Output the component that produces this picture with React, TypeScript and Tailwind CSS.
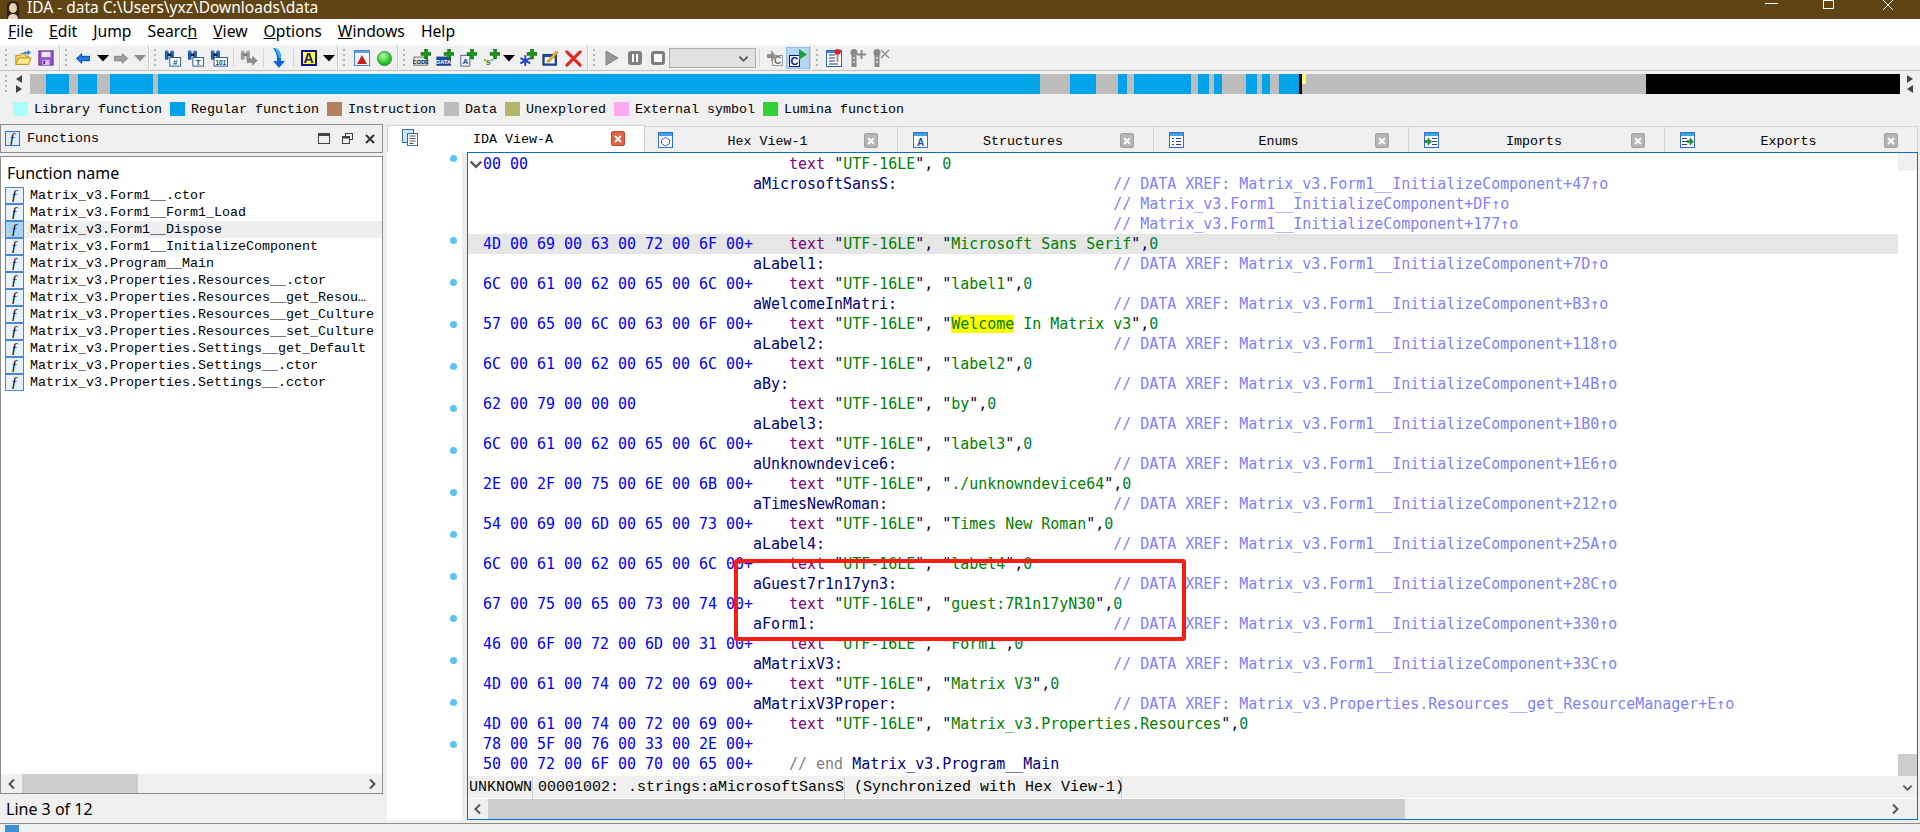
import React from "react";

const MONO = "font-['DejaVu_Sans_Mono',monospace]";
const FIXED = "font-['Liberation_Mono',monospace]";
const SANS = "font-['Noto_Sans',sans-serif]";

/* ---------- small drawn pieces ---------- */
function Handle({ className = "" }: { className?: string }) {
  return (
    <svg width="4" height="20" viewBox="0 0 4 20" className={`shrink-0 ${className}`}>
      {[1, 6, 11, 16].map((y) => (
        <rect key={y} x="1" y={y} width="2" height="2" fill="#b4b4b4" />
      ))}
    </svg>
  );
}
const GroupEnd = ({ className = "" }: { className?: string }) => (
  <div className={`w-[2px] h-[26px] bg-[#cfcfcf] border-r border-white shrink-0 ${className}`} />
);
const ThinSep = ({ className = "" }: { className?: string }) => <div className={`w-px h-[18px] bg-[#d4d4d4] shrink-0 ${className}`} />;

function Btn({ w = 23, children, active = false }: { w?: number; children: React.ReactNode; active?: boolean }) {
  return (
    <div
      style={{ width: w }}
      className={`h-[22px] flex items-center justify-center shrink-0 ${active ? "bg-[#b5d7f3] border border-[#8fc1ea]" : ""}`}
    >
      {children}
    </div>
  );
}
const Drop = ({ c = "#000" }: { c?: string }) => (
  <svg width="12" height="7" viewBox="0 0 12 7"><path d="M0 0h12L6 6.5z" fill={c} /></svg>
);
const IOpen = () => (
  <svg width="18" height="18" viewBox="0 0 20 20">
    <path d="M2 7h5l1-2h5v3h3v9H2z" fill="#f6d060" stroke="#b08a1e" />
    <path d="M2 17l3-7h14l-3 7z" fill="#ffe98a" stroke="#b08a1e" />
    <path d="M9 6c1-3 4-3 6-3V1l4 3-4 3V5c-2 0-4 0-6 1z" fill="#2a7fe0" />
  </svg>
);
const ISave = () => (
  <svg width="16" height="16" viewBox="0 0 18 18">
    <rect x="1" y="1" width="16" height="16" fill="#9a4fd0" stroke="#5a2a90" />
    <rect x="4" y="2" width="10" height="6" fill="#e8e8ee" />
    <rect x="5" y="11" width="8" height="6" fill="#d6c0ea" />
    <rect x="6" y="12" width="2" height="4" fill="#5a2a90" />
  </svg>
);
const IArrow = ({ dir, c1, c2 }: { dir: "l" | "r"; c1: string; c2: string }) => (
  <svg width="14" height="11" viewBox="0 0 16 12" style={{ transform: dir === "r" ? "scaleX(-1)" : undefined }}>
    <path d="M0.5 6L6.5 0.5V3.5H15.5V8.5H6.5V11.5z" fill={c1} stroke={c2} />
  </svg>
);
function IBin({ label, grey }: { label?: string; grey?: boolean }) {
  const c = grey ? "#9a9a9a" : "#1f5fae";
  const wide = label === "101";
  return (
    <svg width="18" height="18" viewBox="0 0 20 20">
      <rect x="1" y="2" width="4" height="10" rx="1" fill={c} />
      <rect x="7" y="2" width="4" height="10" rx="1" fill={c} />
      <rect x="4" y="5" width="4" height="3" fill={grey ? "#777" : "#123"} />
      <rect x="2" y="1" width="2" height="2" fill={grey ? "#ccc" : "#6fa8e0"} />
      <rect x="8" y="1" width="2" height="2" fill={grey ? "#ccc" : "#6fa8e0"} />
      {label ? (
        <>
          <rect x={wide ? 4.5 : 6.5} y="9.5" width={wide ? 15 : 12} height="9.5" fill="#fff" stroke="#1f4f86" />
          <text x={wide ? 12 : 12.5} y="17.5" textAnchor="middle" fontSize={wide ? 7 : 9} fontWeight="bold" fill="#123f70" fontFamily="Liberation Sans">
            {label}
          </text>
        </>
      ) : (
        <path d="M8 11h6V8l5 5-5 5v-3H8z" fill="#8e8e8e" stroke="#6e6e6e" strokeWidth=".6" />
      )}
    </svg>
  );
}
const IDown = () => (
  <svg width="14" height="20" viewBox="0 0 14 20">
    <path d="M1 0c5 0 8 3 8 10v3h4l-6 7-6-7h4v-2C5 6 3 3 1 0z" fill="#0d66dc" />
    <path d="M1 0c5 0 8 3 8 10h-2C6 5 4 2 1 0z" fill="#36b6f2" />
  </svg>
);
const IAbox = () => (
  <div className="w-[16px] h-[16px] bg-[#ffff33] border-2 border-[#14148c] flex items-center justify-center text-[#14148c] text-[14px] font-bold leading-none font-['Liberation_Sans',sans-serif]">
    A
  </div>
);
const IWarn = () => (
  <svg width="16" height="18" viewBox="0 0 16 18">
    <rect x=".5" y="1.5" width="15" height="15" fill="#f2f6fc" stroke="#3f86dc" />
    <rect x="1" y="2" width="14" height="2" fill="#5f9fe8" />
    <path d="M8 6l5 9H3z" fill="#c8201a" />
  </svg>
);
const IGreen = () => (
  <div className="w-[15px] h-[15px] rounded-full border border-[#2c8a2c] bg-[radial-gradient(circle_at_40%_30%,#b8ffb0,#28c828_60%,#109010)]" />
);
const Plus = () => (
  <path d="M13 0h3v4h4v3h-4v4h-3V7H9V4h4z" fill="#14a014" stroke="#0a4a0a" strokeWidth=".7" />
);
function IAdd({ t }: { t: "code" | "data" | "a" | "s" | "star" }) {
  return (
    <svg width="18" height="18" viewBox="0 0 20 20">
      {t === "code" && (
        <>
          <rect x="1" y="9" width="15" height="9" fill="#e8e8e8" stroke="#666" />
          <text x="8.5" y="16.5" textAnchor="middle" fontSize="6.4" fontWeight="bold" fill="#111" fontFamily="Liberation Sans">CODE</text>
        </>
      )}
      {t === "data" && (
        <>
          <rect x="1" y="9" width="15" height="9" fill="#1c4fa8" stroke="#102a66" />
          <text x="8.5" y="16.5" textAnchor="middle" fontSize="6.4" fontWeight="bold" fill="#fff" fontFamily="Liberation Sans">DATA</text>
        </>
      )}
      {t === "a" && (
        <>
          <rect x="2" y="7" width="10" height="12" fill="#eef3fa" stroke="#557" />
          <text x="7" y="17" textAnchor="middle" fontSize="9" fontWeight="bold" fill="#1c4fa8" fontFamily="Liberation Sans">A</text>
        </>
      )}
      {t === "s" && (
        <text x="7" y="18" textAnchor="middle" fontSize="10" fontWeight="bold" fill="#2c8a2c" fontFamily="Liberation Sans">'s'</text>
      )}
      {t === "star" && (
        <g stroke="#1c3fd0" strokeWidth="2">
          <path d="M7 7v12M1.5 10l11 6M1.5 16l11-6" />
        </g>
      )}
      <Plus />
    </svg>
  );
}
const IPencil = () => (
  <svg width="18" height="18" viewBox="0 0 20 20">
    <rect x="1" y="6" width="15" height="12" fill="#1c4fa8" stroke="#0e2a66" />
    <rect x="3" y="9" width="11" height="7" fill="#fff" />
    <path d="M5 14L16 2l2 2L8 15z" fill="#f0b030" stroke="#a06a10" strokeWidth=".6" />
  </svg>
);
const IRedX = () => (
  <svg width="17" height="17" viewBox="0 0 18 18">
    <path d="M2 2l14 14M16 2L2 16" stroke="#e4261c" strokeWidth="3.2" strokeLinecap="round" />
  </svg>
);
const IPlay = () => (
  <svg width="14" height="16" viewBox="0 0 14 16"><path d="M1 1l12 7-12 7z" fill="#9a9a9a" stroke="#7c7c7c" /></svg>
);
const IPause = () => (
  <div className="w-[14px] h-[14px] rounded-[3px] bg-[#7f7f7f] flex items-center justify-center gap-[2px]">
    <div className="w-[2px] h-[8px] bg-white" />
    <div className="w-[2px] h-[8px] bg-white" />
  </div>
);
const IStop = () => (
  <div className="w-[14px] h-[14px] rounded-[3px] bg-[#7f7f7f] flex items-center justify-center">
    <div className="w-[8px] h-[8px] bg-white" />
  </div>
);
const ICArrow = () => (
  <svg width="18" height="18" viewBox="0 0 18 18">
    <rect x="6.5" y="6.5" width="10" height="10" fill="#f4f4f4" stroke="#9a9a9a" />
    <text x="11.5" y="15" textAnchor="middle" fontSize="10" fontWeight="bold" fill="#707070" fontFamily="Liberation Sans">C</text>
    <path d="M1 5h4V1l5 6-5 6V9H1z" fill="#8e8e8e" />
  </svg>
);
const ICPlay = () => (
  <svg width="18" height="18" viewBox="0 0 18 18">
    <rect x=".5" y="6.5" width="10" height="11" fill="#f8f8ff" stroke="#14148c" />
    <text x="5.5" y="16" textAnchor="middle" fontSize="11" fontWeight="bold" fill="#14148c" fontFamily="Liberation Sans">C</text>
    <path d="M10 0l8 5.5-8 5.5z" fill="#18a030" />
  </svg>
);
const IDocPin = () => (
  <svg width="17" height="18" viewBox="0 0 17 18">
    <rect x=".5" y="1.5" width="15" height="16" fill="#fff" stroke="#2a62b8" />
    <rect x="1" y="2" width="14" height="2" fill="#3f86dc" />
    <path d="M3 6h6M3 9h6M3 12h6M3 15h9" stroke="#1c3f86" />
    <circle cx="11.5" cy="3" r="3" fill="#e41c1c" />
    <rect x="10.5" y="5" width="2" height="8" fill="#b88a8a" />
  </svg>
);
const IKey = ({ x }: { x?: boolean }) => (
  <svg width="18" height="18" viewBox="0 0 18 18">
    <circle cx="5" cy="3.5" r="3.5" fill="#8a8a8a" />
    <rect x="2.5" y="5" width="5" height="13" fill="#8a8a8a" />
    <rect x="4" y="8" width="2" height="2" fill="#d0d0d0" />
    <rect x="4" y="12" width="2" height="2" fill="#d0d0d0" />
    {x ? (
      <path d="M9 1l8 8M17 1L9 9" stroke="#8a8a8a" strokeWidth="1.2" />
    ) : (
      <path d="M11.5 1h2v3.5H17v2h-3.500V10h-2V6.500H8v-2h3.500z" fill="#8a8a8a" />
    )}
  </svg>
);
const Chevron = ({ dir, size = 12 }: { dir: "l" | "r" | "d"; size?: number }) => {
  const d = dir === "l" ? "M8 1.500L3.500 6 8 10.500" : dir === "r" ? "M4 1.500L8.500 6 4 10.500" : "M1.500 4L6 8.500 10.500 4";
  return (
    <svg width={size} height={size} viewBox="0 0 12 12">
      <path d={d} fill="none" stroke="#555" strokeWidth="2" />
    </svg>
  );
};

/* ---------- tab icons ---------- */
function TabIcon({ kind }: { kind: string }) {
  const frame = (inner: React.ReactNode) => (
    <svg width="16" height="17" viewBox="0 0 16 17" className="shrink-0">
      <rect x=".5" y="1.500" width="14" height="15" fill="#fff" stroke="#2e6fd8" />
      <rect x="1" y="2" width="13" height="3" fill="#3f9fe8" />
      {inner}
    </svg>
  );
  if (kind === "ida")
    return (
      <svg width="16" height="17" viewBox="0 0 16 17" className="shrink-0">
        <rect x=".5" y=".5" width="11" height="13" fill="#cfe6fa" stroke="#2e6fa8" />
        <rect x="5.500" y="4.500" width="10" height="12" fill="#fff" stroke="#2e6fa8" />
        <path d="M7.500 7h6M7.500 9.500h6M7.500 12h6M7.500 14.500h4" stroke="#456" />
      </svg>
    );
  if (kind === "hex") return frame(<path d="M7.500 6.500l4 2.500v3.500l-4 2.500-4-2.500V9z" fill="#fff" stroke="#3f5ae0" />);
  if (kind === "struct") return frame(<text x="7.500" y="14.500" textAnchor="middle" fontSize="10" fontWeight="bold" fill="#1c4fa8" fontFamily="Liberation Sans">A</text>);
  if (kind === "enum")
    return frame(<path d="M3 7.500h2m2 0h5M3 10.500h2m2 0h5M3 13.500h2m2 0h5" stroke="#1c3fb8" />);
  if (kind === "imp")
    return frame(<><path d="M8 7.500h5M8 10.500h5M8 13.500h5" stroke="#1c3fb8" /><path d="M1 9.500h3V7l3.500 3.500L4 14v-2.500H1z" fill="#18a030" stroke="#0a4a0a" strokeWidth=".5" /></>);
  return frame(<><path d="M2 7.500h5M2 10.500h5M2 13.500h5" stroke="#1c3fb8" /><path d="M7 9.500h3V7l3.500 3.500L10 14v-2.500H7z" fill="#18a030" stroke="#0a4a0a" strokeWidth=".5" /></>);
}
const TabClose = ({ active }: { active?: boolean }) => (
  <div className={`w-[14px] h-[15px] rounded-[2px] flex items-center justify-center shrink-0 ${active ? "bg-[#dd6545] border border-[#c24a2c]" : "bg-[#b4b4b4] border border-[#a0a0a0]"}`}>
    <svg width="8" height="8" viewBox="0 0 8 8"><path d="M1 1l6 6M7 1L1 7" stroke="#fff" strokeWidth="1.800" /></svg>
  </div>
);

function Tab({ kind, label, active, size }: { kind: string; label: string; active?: boolean; size: string }) {
  return (
    <div
      className={`flex items-start shrink-0 pr-[19px] ${size} ${FIXED} text-[13.33px] text-black ${
        active ? "h-[27px] bg-white border border-b-0 border-[#d0d0d0] pt-[3px]" : "h-[26px] bg-[#f0f0f0] border-t border-r border-[#d4d4d4] pt-[4px] mt-px"
      }`}
    >
      <TabIcon kind={kind} />
      <div className="flex-1 text-center leading-[22px] mr-[3px]">{label}</div>
      <div className="mt-[2px]"><TabClose active={active} /></div>
    </div>
  );
}

/* ---------- data ---------- */
const B = "#00a2e8", G = "#bdbdbd", K = "#000000";
const NAV: [number, string][] = [
  [46, G], [69, B], [78, G], [97, B], [110, G], [153, B], [158, G], [1040, B], [1070, G], [1096, B], [1118, G], [1127, B], [1134, G],
  [1191, B], [1198, G], [1209, B], [1214, G], [1222, B], [1246, G], [1257, B], [1262, G], [1270, B], [1279, G], [1299, B], [1302, K], [1646, G], [1900, K],
];
const LEGEND: [string, string][] = [
  ["#a8ffff", "Library function"],
  ["#00a2e8", "Regular function"],
  ["#b67e5c", "Instruction"],
  ["#bdbdbd", "Data"],
  ["#b3b56b", "Unexplored"],
  ["#ffa8f4", "External symbol"],
  ["#33d133", "Lumina function"],
];
const MENU: [string, string, string][] = [
  ["", "F", "ile"], ["", "E", "dit"], ["", "J", "ump"], ["Searc", "h", ""], ["", "V", "iew"], ["", "O", "ptions"], ["", "W", "indows"], ["Help", "", ""],
];
const FUNCS = [
  "Matrix_v3.Form1__.ctor",
  "Matrix_v3.Form1__Form1_Load",
  "Matrix_v3.Form1__Dispose",
  "Matrix_v3.Form1__InitializeComponent",
  "Matrix_v3.Program__Main",
  "Matrix_v3.Properties.Resources__.ctor",
  "Matrix_v3.Properties.Resources__get_Resou…",
  "Matrix_v3.Properties.Resources__get_Culture",
  "Matrix_v3.Properties.Resources__set_Culture",
  "Matrix_v3.Properties.Settings__get_Default",
  "Matrix_v3.Properties.Settings__.ctor",
  "Matrix_v3.Properties.Settings__.cctor",
];
const XR = "Matrix_v3.Form1__InitializeComponent+";
type Row =
  | { k: "h"; hex: string; s?: string; tail?: "first" | "end" | "none" }
  | { k: "l"; label: string; c: string }
  | { k: "c"; c: string };
const ROWS: Row[] = [
  { k: "h", hex: "00 00", tail: "first" },
  { k: "l", label: "aMicrosoftSansS", c: XR + "47" },
  { k: "c", c: XR + "DF" },
  { k: "c", c: XR + "177" },
  { k: "h", hex: "4D 00 69 00 63 00 72 00 6F 00+", s: "Microsoft Sans Serif" },
  { k: "l", label: "aLabel1", c: XR + "7D" },
  { k: "h", hex: "6C 00 61 00 62 00 65 00 6C 00+", s: "label1" },
  { k: "l", label: "aWelcomeInMatri", c: XR + "B3" },
  { k: "h", hex: "57 00 65 00 6C 00 63 00 6F 00+", s: "Welcome In Matrix v3" },
  { k: "l", label: "aLabel2", c: XR + "118" },
  { k: "h", hex: "6C 00 61 00 62 00 65 00 6C 00+", s: "label2" },
  { k: "l", label: "aBy", c: XR + "14B" },
  { k: "h", hex: "62 00 79 00 00 00", s: "by" },
  { k: "l", label: "aLabel3", c: XR + "1B0" },
  { k: "h", hex: "6C 00 61 00 62 00 65 00 6C 00+", s: "label3" },
  { k: "l", label: "aUnknowndevice6", c: XR + "1E6" },
  { k: "h", hex: "2E 00 2F 00 75 00 6E 00 6B 00+", s: "./unknowndevice64" },
  { k: "l", label: "aTimesNewRoman", c: XR + "212" },
  { k: "h", hex: "54 00 69 00 6D 00 65 00 73 00+", s: "Times New Roman" },
  { k: "l", label: "aLabel4", c: XR + "25A" },
  { k: "h", hex: "6C 00 61 00 62 00 65 00 6C 00+", s: "label4" },
  { k: "l", label: "aGuest7r1n17yn3", c: XR + "28C" },
  { k: "h", hex: "67 00 75 00 65 00 73 00 74 00+", s: "guest:7R1n17yN30" },
  { k: "l", label: "aForm1", c: XR + "330" },
  { k: "h", hex: "46 00 6F 00 72 00 6D 00 31 00+", s: "Form1" },
  { k: "l", label: "aMatrixV3", c: XR + "33C" },
  { k: "h", hex: "4D 00 61 00 74 00 72 00 69 00+", s: "Matrix V3" },
  { k: "l", label: "aMatrixV3Proper", c: "Matrix_v3.Properties.Resources__get_ResourceManager+E" },
  { k: "h", hex: "4D 00 61 00 74 00 72 00 69 00+", s: "Matrix_v3.Properties.Resources" },
  { k: "h", hex: "78 00 5F 00 76 00 33 00 2E 00+", tail: "none" },
  { k: "h", hex: "50 00 72 00 6F 00 70 00 65 00+", tail: "end" },
];

const Str = ({ s }: { s: string }) => (
  <>
    <span className="text-[#000040]">"</span>
    {s.startsWith("Welcome") ? (
      <>
        <span className="text-[#008000] bg-[#ffff00]">Welcome</span>
        <span className="text-[#008000]">{s.slice(7)}</span>
      </>
    ) : (
      <span className="text-[#008000]">{s}</span>
    )}
    <span className="text-[#000040]">"</span>
  </>
);

function CodeLine({ r, i }: { r: Row; i: number }) {
  let body: React.ReactNode;
  if (r.k === "h") {
    const head = <span className="text-[#0000ff]">{r.hex.padEnd(34)}</span>;
    if (r.tail === "none") body = head;
    else if (r.tail === "end")
      body = (
        <>
          {head}
          <span className="text-[#808080]">// end </span>
          <span className="text-[#000080]">Matrix_v3.Program__Main</span>
        </>
      );
    else
      body = (
        <>
          {head}
          <span className="text-[#800080]">text</span>
          {" "}
          <Str s="UTF-16LE" />
          <span className="text-[#000040]">, </span>
          {r.tail === "first" ? null : <Str s={r.s || ""} />}
          {r.tail === "first" ? null : <span className="text-[#000040]">,</span>}
          <span className="text-[#008040]">0</span>
        </>
      );
  } else if (r.k === "l") {
    body = (
      <>
        {" ".repeat(30)}
        <span className="text-[#000080]">{r.label + ":"}</span>
        {" ".repeat(40 - r.label.length - 1)}
        <span className="text-[#8080ff]">{"// DATA XREF: " + r.c + "↑o"}</span>
      </>
    );
  } else {
    body = (
      <>
        {" ".repeat(70)}
        <span className="text-[#8080ff]">{"// " + r.c + "↑o"}</span>
      </>
    );
  }
  return (
    <div className={`h-[20px] flex items-center whitespace-pre ${i === 4 ? "bg-[#e6e6e6]" : ""}`}>
      <div className="w-[15px] shrink-0 flex items-center justify-center">{i === 0 ? <Chevron dir="d" size={14} /> : null}</div>
      <div className="leading-[20px]">{body}</div>
    </div>
  );
}

const DOTS = new Set([0, 4, 6, 8, 10, 12, 14, 16, 18, 20, 22, 24, 26, 28]);

/* ---------- page ---------- */
export default function App() {
  return (
    <div className="w-[1920px] h-[832px] overflow-hidden bg-[#f0f0f0] flex flex-col text-black">
      {/* title bar */}
      <div className="h-[19px] bg-[#604413] flex items-start shrink-0 overflow-hidden text-white">
        <svg width="16" height="19" viewBox="0 0 16 19" className="ml-[5px] shrink-0">
          <path d="M2 19V5c0-5 12-5 12 0v14z" fill="#2c2018" />
          <ellipse cx="8" cy="8" rx="4" ry="5" fill="#e8d0b0" />
          <path d="M3 19c0-4 3-5 5-5s5 1 5 5z" fill="#e4d4bc" />
        </svg>
        <div className={`${SANS} text-[15.5px] leading-[14px] ml-[6px] whitespace-pre`}>IDA - data C:\Users\yxz\Downloads\data</div>
        <div className="ml-auto flex items-start">
          <div className="w-[13px] h-px bg-white mt-[3px] mr-[45px]" />
          <div className="relative w-[11px] h-[9px] border border-white mr-[48px]" />
          <svg width="12" height="10" viewBox="0 0 12 10" className="mr-[26px]"><path d="M1 0l10 10M11 0L1 10" stroke="#fff" /></svg>
        </div>
      </div>

      {/* menu */}
      <div className={`h-[25px] bg-white flex items-center gap-[16px] pl-[8px] shrink-0 ${SANS} text-[15.7px]`}>
        {MENU.map(([a, u, c], i) => (
          <div key={i} className="leading-[25px]">
            {a}
            {u ? <u>{u}</u> : null}
            {c}
          </div>
        ))}
      </div>

      {/* toolbar */}
      <div className="h-[27px] bg-[#f0f0f0] border-t-2 border-[#f8f8f8] border-b border-b-[#c4c4c4] flex items-center shrink-0">
        <Handle className="ml-[4px] mr-[3px]" />
        <Btn><IOpen /></Btn><Btn><ISave /></Btn>
        <GroupEnd className="ml-[2px]" />
        <Handle className="ml-[3px] mr-[3px]" />
        <Btn><IArrow dir="l" c1="#1a7ce8" c2="#0a3aa8" /></Btn>
        <Btn w={17}><Drop /></Btn>
        <Btn w={20}><IArrow dir="r" c1="#a0a0a0" c2="#7c7c7c" /></Btn>
        <Btn w={17}><Drop c="#8c8c8c" /></Btn>
        <GroupEnd />
        <Handle className="ml-[3px] mr-[4px]" />
        <Btn><IBin label="#" /></Btn><Btn><IBin label="T" /></Btn><Btn><IBin label="101" /></Btn>
        <ThinSep className="mx-[3px]" />
        <Btn><IBin grey /></Btn>
        <ThinSep className="mx-[3px]" />
        <Btn><IDown /></Btn>
        <ThinSep className="mx-[3px]" />
        <Btn><IAbox /></Btn>
        <Btn w={17}><Drop /></Btn>
        <GroupEnd />
        <Handle className="ml-[3px] mr-[4px]" />
        <Btn><IWarn /></Btn><Btn><IGreen /></Btn>
        <GroupEnd className="ml-[1px]" />
        <Handle className="ml-[3px] mr-[4px]" />
        <Btn><IAdd t="code" /></Btn><Btn><IAdd t="data" /></Btn><Btn><IAdd t="a" /></Btn><Btn><IAdd t="s" /></Btn>
        <Btn w={14}><Drop /></Btn>
        <Btn><IAdd t="star" /></Btn><Btn><IPencil /></Btn><Btn><IRedX /></Btn>
        <GroupEnd className="ml-[2px]" />
        <Handle className="ml-[3px] mr-[4px]" />
        <Btn><IPlay /></Btn><Btn><IPause /></Btn><Btn><IStop /></Btn>
        <div className="w-[87px] h-[20px] bg-[#e1e1e1] border border-[#adadad] flex items-center justify-end pr-[6px] shrink-0">
          <Chevron dir="d" size={11} />
        </div>
        <ThinSep className="ml-[3px] mr-[3px]" />
        <Btn><ICArrow /></Btn>
        <Btn w={24} active><ICPlay /></Btn>
        <GroupEnd />
        <Handle className="ml-[3px] mr-[4px]" />
        <Btn><IDocPin /></Btn><Btn><IKey /></Btn><Btn><IKey x /></Btn>
      </div>

      {/* navigator */}
      <div className="h-[24px] flex items-center shrink-0 pt-[2px]">
        <Handle className="ml-[4px]" />
        <div className="w-[22px] flex flex-col items-center gap-[2px]">
          <svg width="6" height="8" viewBox="0 0 6 8"><path d="M6 0v8L0 4z" fill="#444" /></svg>
          <svg width="6" height="8" viewBox="0 0 6 8"><path d="M0 0v8l6-4z" fill="#444" /></svg>
        </div>
        <div className="relative w-[1870px] h-[20px] flex shrink-0">
          {NAV.map(([end, col], i) => (
            <div key={i} style={{ width: end - (i ? NAV[i - 1][0] : 30), background: col }} className="h-full shrink-0" />
          ))}
          <div className="absolute left-[1272px] top-0 w-[4px] h-[10px] bg-[#ffff66]" />
        </div>
        <div className="flex-1 flex flex-col items-center gap-[2px]">
          <svg width="6" height="8" viewBox="0 0 6 8"><path d="M0 0v8l6-4z" fill="#444" /></svg>
          <svg width="6" height="8" viewBox="0 0 6 8"><path d="M6 0v8L0 4z" fill="#444" /></svg>
        </div>
      </div>

      {/* legend */}
      <div className={`h-[29px] flex items-center pl-[13px] gap-[8px] shrink-0 ${FIXED} text-[13.33px]`}>
        {LEGEND.map(([c, t]) => (
          <div key={t} className="flex items-center gap-[6px]">
            <div style={{ background: c }} className="w-[15px] h-[14px]" />
            <span className="whitespace-pre">{t}</span>
          </div>
        ))}
      </div>

      {/* workspace */}
      <div className="flex-1 flex min-h-0">
        {/* functions panel */}
        <div className="w-[383px] flex flex-col shrink-0">
          <div className={`h-[29px] border border-[#8c8c8c] flex items-center pl-[4px] pr-[7px] shrink-0 ${FIXED} text-[13.33px]`}>
            <div className="w-[15px] h-[15px] border border-[#2e6fd8] bg-[#dcecfb] flex items-center justify-center font-['Liberation_Serif',serif] italic text-[14px] leading-none">ƒ</div>
            <span className="ml-[7px] mt-px">Functions</span>
            <div className="ml-auto flex items-center gap-[12px]">
              <div className="w-[12px] h-[11px] border border-[#444] border-t-[3px]" />
              <svg width="11" height="11" viewBox="0 0 11 11"><rect x="3.500" y=".5" width="7" height="6" fill="none" stroke="#444" /><rect x=".5" y="3.500" width="7" height="7" fill="#f0f0f0" stroke="#444" /><rect x=".5" y="3.500" width="7" height="2" fill="#444" /></svg>
              <svg width="10" height="10" viewBox="0 0 10 10"><path d="M1 1l8 8M9 1L1 9" stroke="#333" strokeWidth="2" /></svg>
            </div>
          </div>
          <div className="mt-[3px] h-[638px] border border-[#8c8c8c] bg-white flex flex-col shrink-0">
            <div className={`${SANS} text-[16px] leading-[22px] pl-[6px] pt-[5px] h-[30px] shrink-0`}>Function name</div>
            <div className={`flex-1 min-h-0 ${FIXED} text-[13.33px]`}>
              {FUNCS.map((f, i) => (
                <div key={f} className={`h-[17px] flex items-center ${i === 2 ? "bg-[#efefef]" : ""}`}>
                  <div className={`ml-[4px] w-[19px] h-[17px] border border-[#4a86d8] flex items-center justify-center font-['Liberation_Serif',serif] italic text-[15px] leading-none shrink-0 ${i === 2 ? "bg-[#a8d4f4]" : "bg-[#e8f2fc]"}`}>ƒ</div>
                  <span className="ml-[6px] whitespace-pre">{f}</span>
                </div>
              ))}
            </div>
            <div className="h-[19px] bg-[#f0f0f0] flex items-center shrink-0">
              <div className="w-[21px] flex justify-center"><Chevron dir="l" /></div>
              <div className="w-[116px] h-full bg-[#cdcdcd]" />
              <div className="ml-auto w-[21px] flex justify-center"><Chevron dir="r" /></div>
            </div>
          </div>
          <div className={`flex-1 ${SANS} text-[16px] pl-[6px] flex items-center`}>Line 3 of 12</div>
        </div>

        {/* right side */}
        <div className="flex-1 min-w-0 flex flex-col ml-[4px] pt-px">
          <div className="h-[27px] flex shrink-0 items-start">
            <Tab kind="ida" label="IDA View-A" active size="w-[258px] pl-[14px]" />
            <Tab kind="hex" label="Hex View-1" size="w-[253px] pl-[13px]" />
            <Tab kind="struct" label="Structures" size="w-[256px] pl-[15px]" />
            <Tab kind="enum" label="Enums" size="w-[255px] pl-[15px]" />
            <Tab kind="imp" label="Imports" size="w-[256px] pl-[15px]" />
            <Tab kind="exp" label="Exports" size="w-[253px] pl-[15px]" />
          </div>
          <div className="h-[668px] flex shrink-0">
            {/* gutter */}
            <div className="w-[75px] bg-white shrink-0 pt-[1px] pl-[63px]">
              {ROWS.map((_, i) => (
                <div key={i} className="h-[20px]">
                  {DOTS.has(i) ? <div className="w-[7px] h-[7px] rounded-full bg-[#58c4f8] mt-[2px]" /> : null}
                </div>
              ))}
            </div>
            <div className="w-[5px] bg-[#ececec] shrink-0" />
            {/* listing */}
            <div className="w-[1451px] border border-[#0a6ec8] mr-[2px] bg-white flex flex-col shrink-0">
              <div className="flex-1 min-h-0 flex">
                <div className="flex-1 min-w-0 flex flex-col">
                  <div className={`relative flex-1 min-h-0 pt-px ${MONO} text-[14.96px]`}>
                    {ROWS.map((r, i) => (
                      <CodeLine key={i} r={r} i={i} />
                    ))}
                    <div className="absolute left-[266px] top-[406px] w-[452px] h-[82px] border-4 border-[#fb1d14] rounded-[3px]" />
                  </div>
                  <div className={`h-[22px] bg-[#f0f0f0] flex items-center shrink-0 pt-[2px] ${FIXED} text-[15px] whitespace-pre`}>
                    <div className="w-[65px] pl-[1px] border-r border-[#d0d0d0]">UNKNOWN</div>
                    <div className="w-[312px] pl-[5px] border-r border-[#d0d0d0]">00001002: .strings:aMicrosoftSansS</div>
                    <div className="w-[277px] pl-[9px] border-r border-[#d0d0d0]">(Synchronized with Hex View-1)</div>
                  </div>
                </div>
                <div className="w-[19px] shrink-0 flex flex-col">
                  <div className="h-[18px] bg-[#f0f0f0] shrink-0" />
                  <div className="flex-1 bg-white" />
                  <div className="h-[22px] bg-[#cdcdcd] shrink-0" />
                  <div className="h-[22px] bg-[#f0f0f0] shrink-0 flex items-center justify-center"><Chevron dir="d" size={11} /></div>
                </div>
              </div>
              <div className="h-[20px] mt-px bg-[#f0f0f0] flex items-center shrink-0">
                <div className="w-[20px] flex justify-center"><Chevron dir="l" /></div>
                <div className="w-[917px] h-full bg-[#cdcdcd]" />
                <div className="ml-auto w-[32px] pr-[12px] flex justify-center"><Chevron dir="r" /></div>
              </div>
            </div>
          </div>
        </div>
      </div>

      {/* bottom strip */}
      <div className="h-[9px] border-t border-[#8c8c8c] bg-[#f0f0f0] shrink-0 pl-[5px] pt-[1px] overflow-hidden">
        <div className="w-[14px] h-[14px] bg-[#3f8fd8]" />
      </div>
    </div>
  );
}
